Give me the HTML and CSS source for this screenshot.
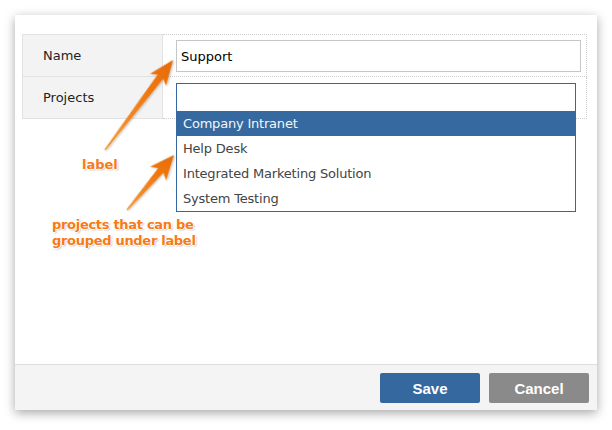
FILE: index.html
```html
<!DOCTYPE html>
<html>
<head>
<meta charset="utf-8">
<link rel="stylesheet" href="styles.css">
</head>
<body>
<div class="dialog">
  <div class="content">
    <div class="form">
      <div class="row">
        <div class="label">Name</div>
        <div class="field"><div class="input">Support</div></div>
      </div>
      <div class="row">
        <div class="label">Projects</div>
        <div class="field">
          <div class="multiselect">
            <div class="ms-box">
              <div class="ms-input"></div>
              <ul class="ms-list">
                <li class="active">Company Intranet</li>
                <li>Help Desk</li>
                <li>Integrated Marketing Solution</li>
                <li>System Testing</li>
              </ul>
            </div>
          </div>
        </div>
      </div>
    </div>
  </div>
  <div class="footer">
    <button class="btn save">Save</button>
    <button class="btn cancel">Cancel</button>
  </div>
</div>

<div class="note note-label">label</div>
<div class="note note-projects">projects that can be<br>grouped under label</div>

<svg class="arrows" width="612" height="430" viewBox="0 0 612 430">
  <defs>
    <linearGradient id="og" x1="0" y1="0" x2="1" y2="0">
      <stop offset="0" stop-color="#f39a3a"/>
      <stop offset="0.6" stop-color="#f07a12"/>
      <stop offset="1" stop-color="#e66a05"/>
    </linearGradient>
    <filter id="sh" x="-20%" y="-20%" width="140%" height="140%">
      <feDropShadow dx="0.5" dy="1" stdDeviation="0.8" flood-color="#000" flood-opacity="0.3"/>
    </filter>
  </defs>
  <g transform="translate(105,150) rotate(-52.9)" filter="url(#sh)">
    <path d="M0,-0.8 L92,-3.4 Q89,-8 88,-10 L112.8,0 L88,10 Q89,8 92,3.4 L0,0.8 Z" fill="url(#og)"/>
  </g>
  <g transform="translate(127,210) rotate(-49.5)" filter="url(#sh)">
    <path d="M0,-0.8 L52,-3.6 Q49,-8.5 48,-10.5 L72.3,0 L48,10.5 Q49,8.5 52,3.6 L0,0.8 Z" fill="url(#og)"/>
  </g>
</svg>
</body>
</html>
```
FILE: styles.css
```css
html, body {
  margin: 0;
  padding: 0;
  background: #fff;
}
body {
  width: 612px;
  height: 430px;
  padding: 15px;
  box-sizing: border-box;
  position: relative;
  font-family: "DejaVu Sans", Verdana, sans-serif;
  font-size: 13px;
}
.dialog {
  width: 582px;
  height: 395px;
  background: #fff;
  box-shadow: 0 3px 10px rgba(0,0,0,0.35);
  display: flex;
  flex-direction: column;
}
.content {
  flex: 1;
  padding: 19px 10px 0 7px;
}
.form {
  display: flex;
  flex-direction: column;
}
.row {
  display: flex;
  height: 43px;
}
.row + .row {
  height: 42px;
}
.label {
  width: 119px;
  background: #f3f3f3;
  border: 1px solid #e2e2e2;
  border-top: none;
  padding-left: 20px;
  display: flex;
  align-items: center;
  color: #1e1e24;
}
.row:first-child .label {
  border-top: 1px solid #e2e2e2;
}
.field {
  flex: 1;
  border-right: 1px dotted #cfcfcf;
  border-bottom: 1px dotted #cfcfcf;
  padding: 6px 5px 0 13px;
}
.row:first-child .field {
  border-top: 1px dotted #cfcfcf;
  padding-top: 5px;
}
.input {
  height: 30px;
  border: 1px solid #c6c6c6;
  display: flex;
  align-items: center;
  padding-left: 4px;
  color: #000;
}
.multiselect {
  position: relative;
  margin-right: 5px;
  height: 30px;
}
.ms-box {
  position: absolute;
  top: 0;
  left: 0;
  right: 0;
  border: 1px solid #35689e;
  background: #fff;
  z-index: 2;
}
.ms-input {
  height: 27px;
}
.ms-list {
  list-style: none;
  margin: 0;
  padding: 0;
}
.ms-list li {
  height: 25px;
  line-height: 25px;
  padding-left: 6px;
  color: #444;
  letter-spacing: -0.2px;
}
.ms-list li.active {
  background: #35699f;
  color: #f2f5fa;
}
.footer {
  border-top: 1px solid #dedede;
  background: #f4f4f4;
  display: flex;
  justify-content: flex-end;
  align-items: flex-start;
  gap: 9px;
  padding: 8px 8px 0 0;
  box-sizing: border-box;
  height: 46px;
}
.btn {
  width: 100px;
  height: 30px;
  border: none;
  border-radius: 2px;
  color: #fff;
  font-family: "Liberation Sans", Arial, sans-serif;
  font-weight: bold;
  font-size: 15px;
  padding: 0;
}
.save { background: #35689e; }
.cancel { background: #8a8a8a; }
.note {
  position: absolute;
  font-family: "DejaVu Sans", Verdana, sans-serif;
  font-weight: bold;
  font-size: 13px;
  line-height: 16px;
  color: #f67a16;
  text-shadow: -1px 0 #fff, 1px 0 #fff, 0 -1px #fff, 0 1px #fff, 1px 1px 2px rgba(0,0,0,0.4);
  z-index: 3;
}
.note-label {
  left: 82px;
  top: 157px;
}
.note-projects {
  left: 52px;
  top: 217px;
  letter-spacing: -0.3px;
}
.arrows {
  position: absolute;
  left: 0;
  top: 0;
  z-index: 4;
  pointer-events: none;
}
```
